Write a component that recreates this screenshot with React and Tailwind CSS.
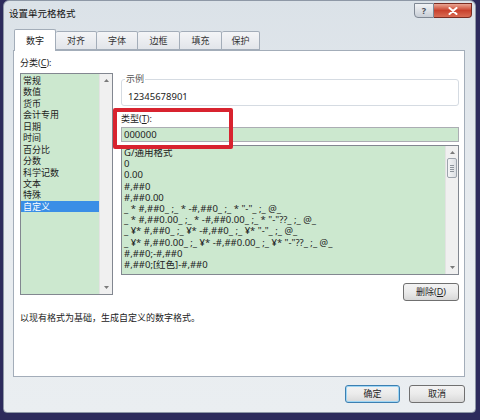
const cats = ['常规', '数值', '货币', '会计专用', '日期', '时间', '百分比', '分数', '科学记数', '文本', '特殊', '自定义'];
const fmts = [
  'G/通用格式',
  '0',
  '0.00',
  '#,##0',
  '#,##0.00',
  '_ * #,##0_ ;_ * -#,##0_ ;_ * "-"_ ;_ @_',
  '_ * #,##0.00_ ;_ * -#,##0.00_ ;_ * "-"??_ ;_ @_',
  '_ ¥* #,##0_ ;_ ¥* -#,##0_ ;_ ¥* "-"_ ;_ @_',
  '_ ¥* #,##0.00_ ;_ ¥* -#,##0.00_ ;_ ¥* "-"??_ ;_ @_',
  '#,##0;-#,##0',
  '#,##0;[红色]-#,##0',
];
const tabs = [
  ['数字', 'w-[42px]'],
  ['对齐', 'w-[41px]'],
  ['字体', 'w-[41px]'],
  ['边框', 'w-[42px]'],
  ['填充', 'w-[42px]'],
  ['保护', 'w-[38px]'],
];

function Arrow({ up }) {
  return (
    <svg width="5" height="3" viewBox="0 0 5 3" className="block">
      <path d={up ? 'M0 3 L2.5 0 L5 3 Z' : 'M0 0 L2.5 3 L5 0 Z'} fill="#7a7a7a" />
    </svg>
  );
}

function ScrollBar({ thumb }) {
  return (
    <div className="w-[13px] h-full bg-[#f0f0f0] border-l border-[#e3e3e3] flex flex-col items-center justify-between py-[5px]">
      <div className="flex flex-col items-center">
        <Arrow up />
        {thumb && (
          <div className="mt-[4px] w-[10px] h-[20px] rounded-[2px] border border-[#9da4ad] bg-gradient-to-r from-[#f4f5f6] to-[#dcdfe3] flex flex-col items-center justify-center gap-[1px]">
            <div className="w-[4px] h-px bg-[#8d949c]" />
            <div className="w-[4px] h-px bg-[#8d949c]" />
            <div className="w-[4px] h-px bg-[#8d949c]" />
            <div className="w-[4px] h-px bg-[#8d949c]" />
          </div>
        )}
      </div>
      <Arrow />
    </div>
  );
}

function Btn({ children, def, w }) {
  return (
    <div
      className={`${w} h-[18px] rounded-[3px] border ${def ? 'border-[#3c7fb1] shadow-[inset_0_0_0_1px_#9ed6f5]' : 'border-[#707070]'} bg-gradient-to-b from-[#f3f3f3] via-[#ebebeb] to-[#d8d8d8] flex items-center justify-center text-[9px] text-[#222]`}
    >
      {children}
    </div>
  );
}

export default function App() {
  return (
    <div
      className="w-[480px] h-[420px] bg-[#2d2b5c] pl-[3px] pr-[4px] pb-[7px] overflow-hidden"
      style={{ fontFamily: '"Noto Sans", "Noto Sans CJK SC", sans-serif' }}
    >
      <div className="h-full rounded-t-[6px] rounded-b-[4px] border border-[#8e98a6] bg-gradient-to-b from-[#dbe2e8] via-[#e7ebef] to-[#eaeef1] flex flex-col pl-[9px] pr-[10px]">
        {/* title bar */}
        <div className="h-[29px] flex items-start justify-between -ml-[4px] -mr-[7px] shrink-0">
          <div className="pt-[7px] text-[9.5px] leading-[12px] text-[#111]">设置单元格格式</div>
          <div className="flex">
            <div className="w-[20px] h-[15px] mt-[2px] rounded-bl-[4px] border border-[#7f8894] bg-gradient-to-b from-[#f1f3f5] via-[#dde1e6] to-[#c8ced6] flex items-center justify-center text-[9px] leading-none text-[#4a4f57] font-bold">
              ?
            </div>
            <div className="w-[38px] h-[15px] mt-[2px] rounded-br-[4px] border border-l-0 border-[#7a2c22] bg-gradient-to-b from-[#e9a593] via-[#c8412d] to-[#d96a52] flex items-center justify-center">
              <svg width="10" height="8" viewBox="0 0 10 8">
                <path d="M1.5 1 L8.5 7 M8.5 1 L1.5 7" stroke="#fff" strokeWidth="2" strokeLinecap="round" />
              </svg>
            </div>
          </div>
        </div>

        {/* tabs */}
        <div className="h-[20px] flex items-end pl-[1px] shrink-0">
          {tabs.map(([t, w], i) =>
            i === 0 ? (
              <div
                key={t}
                className={`${w} h-[22px] -mb-px relative z-10 bg-white border border-b-0 border-[#a3adb9] rounded-t-[2px] flex items-center justify-center text-[9px] text-[#222]`}
              >
                {t}
              </div>
            ) : (
              <div
                key={t}
                className={`${w} h-[19px] bg-gradient-to-b from-[#f4f5f7] to-[#e2e5ea] border border-l-0 border-[#a3adb9] rounded-t-[2px] flex items-center justify-center text-[9px] text-[#333]`}
              >
                {t}
              </div>
            )
          )}
        </div>

        {/* panel */}
        <div className="h-[327px] shrink-0 bg-white border border-[#a3adb9] relative pt-[6px] pl-[6px] pr-[5px]">
          <div className="flex gap-[8px]">
            {/* left column */}
            <div className="w-[93px] flex flex-col">
              <div className="h-[12px] text-[9px] leading-[12px] text-[#222] mb-[4px]">
                分类(<span className="underline">C</span>):
              </div>
              <div className="h-[222px] border border-[#828790] bg-[#cce8cf] flex">
                <div className="flex-1 pt-[1px]">
                  {cats.map((c) => (
                    <div
                      key={c}
                      className={`h-[11.45px] leading-[11.45px] text-[9px] pl-[2px] ${c === '自定义' ? 'bg-[#3a8ee6] text-white' : 'text-[#222]'}`}
                    >
                      {c}
                    </div>
                  ))}
                </div>
                <ScrollBar />
              </div>
            </div>

            {/* right column */}
            <div className="flex-1 flex flex-col pt-[16px]">
              <fieldset className="border border-[#d5dbe2] rounded-[3px] px-[6px] pb-[2px] h-[33px]">
                <legend className="text-[9px] leading-[12px] text-[#555] px-[1px] -ml-[3px]">示例</legend>
                <div className="pt-[6px] text-[9.5px] leading-[12px] text-[#222]">12345678901</div>
              </fieldset>
              <div className="mt-[7px] h-[12px] text-[9px] leading-[12px] text-[#222]">
                类型(<span className="underline">T</span>):
              </div>
              <div className="mt-[2px] h-[15px] border border-[#abadb3] bg-[#cce8cf] pl-[2px] text-[9.5px] leading-[13px] text-[#222]">
                000000
              </div>
              <div className="mt-[3px] h-[130px] border border-[#828790] bg-[#cce8cf] flex">
                <div className="flex-1 pt-[1px] pl-[2px] overflow-hidden">
                  {fmts.map((f, i) => (
                    <div key={i} className="h-[11.2px] leading-[11.2px] text-[9.5px] text-[#222] whitespace-pre">
                      {f}
                    </div>
                  ))}
                </div>
                <ScrollBar thumb />
              </div>
              <div className="mt-[8px] flex justify-end">
                <Btn w="w-[56px]">
                  删除(<span className="underline">D</span>)
                </Btn>
              </div>
            </div>
          </div>
          <div className="mt-[11px] text-[9px] leading-[12px] text-[#222]">以现有格式为基础，生成自定义的数字格式。</div>

          {/* annotation highlight */}
          <div className="absolute left-[99px] top-[57px] w-[120px] h-[41px] border-[4px] border-[#d8232f] rounded-[2px]" />
        </div>

        {/* bottom buttons */}
        <div className="flex justify-end gap-[9px] pt-[8px]">
          <Btn w="w-[55px]" def>
            确定
          </Btn>
          <Btn w="w-[56px]">取消</Btn>
        </div>
      </div>
    </div>
  );
}
